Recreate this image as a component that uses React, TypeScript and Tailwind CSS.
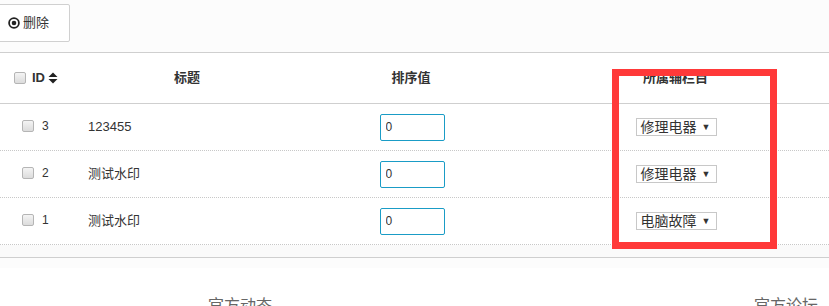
const rows = [
  { id: 3, title: '123455', column: '修理电器' },
  { id: 2, title: '测试水印', column: '修理电器' },
  { id: 1, title: '测试水印', column: '电脑故障' },
]

const font = "font-['Liberation_Sans','Noto_Sans_CJK_SC',sans-serif]"

function Checkbox() {
  return <span className="inline-block h-[12px] w-[12px] rounded-[2px] border border-[#b5b5b5] bg-gradient-to-b from-[#f4f4f4] to-[#dcdcdc]" />
}

function DotCircle() {
  return (
    <svg width="12" height="12" viewBox="0 0 12 12" className="shrink-0">
      <circle cx="6" cy="6" r="4.9" fill="none" stroke="#222" strokeWidth="1.8" />
      <circle cx="6" cy="6" r="2.3" fill="#222" />
    </svg>
  )
}

function SortIcon() {
  return (
    <svg width="10" height="12" viewBox="0 0 10 12" className="shrink-0">
      <path d="M5 0.5 L9.5 5 L0.5 5 Z" fill="#222" />
      <path d="M5 11.5 L9.5 7 L0.5 7 Z" fill="#222" />
    </svg>
  )
}

export default function App() {
  return (
    <div className={`relative h-[306px] w-[829px] overflow-hidden bg-white ${font} text-[#333]`}>
      {/* toolbar */}
      <div className="h-[53px] border-b border-[#cfcfcf] bg-[#fcfcfc] pt-[4px]">
        <button className="ml-[-10px] flex h-[38px] w-[80px] items-center gap-[3px] rounded-[2px] border border-[#d0d0d0] bg-white pl-[17px] text-[13px] text-[#333]">
          <DotCircle />
          <span>删除</span>
        </button>
      </div>

      {/* table head */}
      <div className="grid h-[51px] grid-cols-[74px_226px_222px_1fr] items-center border-b border-[#cfcfcf] text-[13px] font-bold">
        <div className="flex items-center gap-[6px] pl-[14px]">
          <Checkbox />
          <span className="flex items-center gap-[3px]">
            ID
            <SortIcon />
          </span>
        </div>
        <div className="text-center">标题</div>
        <div className="text-center">排序值</div>
        <div className="text-center">所属辅栏目</div>
      </div>

      {/* rows */}
      {rows.map((r) => (
        <div
          key={r.id}
          className="grid h-[47px] grid-cols-[74px_226px_222px_1fr] items-center border-b border-dotted border-[#c8c8c8] text-[13px]"
        >
          <div className="flex items-center gap-[8px] pl-[22px] pb-[2px]">
            <Checkbox />
            <span className="text-[12px]">{r.id}</span>
          </div>
          <div className="pl-[14px]">{r.title}</div>
          <div className="flex justify-center pl-[2px]">
            <input
              readOnly
              value="0"
              className="h-[27px] w-[65px] rounded-[2px] border border-[#1a9cc6] px-[5px] text-[12px] text-[#333] outline-none"
            />
          </div>
          <div className="flex justify-center pl-[1px]">
            <div className="flex h-[18px] w-[81px] items-center justify-between border border-[#c8c8c8] bg-white pl-[4px] pr-[5px] text-[14px] leading-none">
              <span>{r.column}</span>
              <span className="text-[9px]">▼</span>
            </div>
          </div>
        </div>
      ))}

      {/* strip */}
      <div className="h-[13px] border-b border-[#cfcfcf] bg-[#fafafa]" />
      <div className="h-[10px] bg-[#fcfcfc]" />

      {/* footer */}
      <div className="relative h-[40px] text-[16px] text-[#666]">
        <span className="absolute left-[208px] top-[26px]">官方动态</span>
        <span className="absolute left-[754px] top-[26px]">官方论坛</span>
      </div>

      {/* annotation */}
      <div className="pointer-events-none absolute left-[612px] top-[69px] h-[180px] w-[165px] border-[7px] border-[#ff3939]" />
    </div>
  )
}
